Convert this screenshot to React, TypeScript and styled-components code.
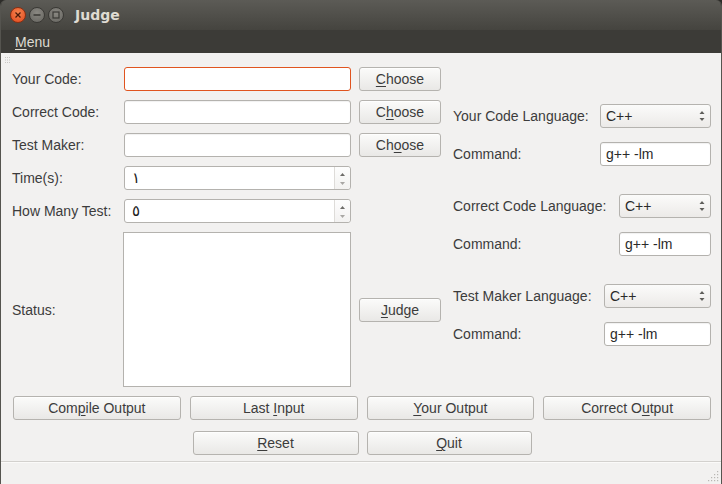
import React from "react";
import styled, { createGlobalStyle } from "styled-components";

const GlobalStyle = createGlobalStyle`
  html, body { margin: 0; padding: 0; background: #2d2c29; }
  body { font-family: "Liberation Sans", "DejaVu Sans", sans-serif; font-size: 14px; }
  * { box-sizing: border-box; }
`;

const Window = styled.div`
  width: 722px;
  height: 484px;
  display: flex;
  flex-direction: column;
  overflow: hidden;
  border-radius: 6px 6px 0 0;
  border-left: 1px solid #55544f;
  border-right: 1px solid #55544f;
`;

const TitleBar = styled.div`
  height: 30px;
  flex: none;
  display: flex;
  align-items: center;
  padding-left: 9px;
  background: linear-gradient(#5c5b56, #45443f);
`;

const WinButtons = styled.div`
  display: flex;
  gap: 3px;
  margin-right: 11px;
`;

const WinButton = styled.div<{ $close?: boolean }>`
  width: 16px;
  height: 16px;
  border-radius: 50%;
  border: 1px solid ${(p) => (p.$close ? "#8a2f12" : "#3a3935")};
  background: ${(p) =>
    p.$close
      ? "radial-gradient(circle at 50% 35%, #f6844f, #e1471c)"
      : "radial-gradient(circle at 50% 35%, #8a8882, #65645f)"};
  display: flex;
  align-items: center;
  justify-content: center;
`;

const Title = styled.div`
  color: #dfdbd2;
  font-family: "DejaVu Sans", sans-serif;
  font-weight: bold;
  font-size: 14px;
`;

const MenuBar = styled.div`
  height: 23px;
  flex: none;
  background: #3c3b37;
  display: flex;
  align-items: center;
  padding-left: 14px;
  color: #dfdbd2;
  font-size: 14px;
`;

const Body = styled.div`
  position: relative;
  flex: 1;
  background: #f2f1f0;
  display: flex;
  flex-direction: column;
`;

const Grip = styled.svg`
  position: absolute;
  left: 4px;
  top: 3px;
`;

const Main = styled.div`
  display: flex;
  padding: 14px 0 0 11px;
  gap: 12px;
`;

const LeftGrid = styled.div`
  display: grid;
  grid-template-columns: 104px 227px 82px;
  grid-template-rows: repeat(5, 24px) 155px;
  column-gap: 8px;
  row-gap: 9px;
`;

const Label = styled.div`
  color: #3c3c3c;
  font-size: 14px;
  align-self: center;
  white-space: nowrap;
`;

const TextField = styled.div<{ $focus?: boolean }>`
  height: 24px;
  background: #fff;
  border: 1px solid ${(p) => (p.$focus ? "#e0541f" : "#b4b2ae")};
  border-radius: 3px;
  display: flex;
  align-items: center;
  padding-left: 5px;
  color: #2a2a2a;
  font-size: 14px;
  box-shadow: ${(p) => (p.$focus ? "none" : "inset 0 1px 1px rgba(0,0,0,0.06)")};
`;

const SpinBox = styled.div`
  height: 24px;
  background: #fff;
  border: 1px solid #b4b2ae;
  border-radius: 3px;
  display: flex;
  align-items: stretch;
  color: #1a1a1a;
`;

const SpinValue = styled.div`
  flex: 1;
  display: flex;
  align-items: center;
  padding-left: 7px;
  font-family: "DejaVu Sans", sans-serif;
  font-size: 15px;
`;

const SpinArrows = styled.div`
  width: 16px;
  border-left: 1px solid #dedcd9;
  background: linear-gradient(#fdfdfd, #f3f2f1);
  border-radius: 0 3px 3px 0;
  display: flex;
  flex-direction: column;
  align-items: center;
  justify-content: space-between;
  padding: 6px 0 4px;
`;

const StatusArea = styled.div`
  background: #fff;
  border: 1px solid #b4b2ae;
  margin-left: -1px;
`;

const Button = styled.div<{ $w?: number }>`
  height: 24px;
  ${(p) => (p.$w ? `width: ${p.$w}px;` : "flex: 1;")}
  border: 1px solid #b5b3af;
  border-radius: 3px;
  background: linear-gradient(#fbfbfa, #e9e8e6);
  box-shadow: 0 1px 0 rgba(255,255,255,0.7) inset;
  display: flex;
  align-items: center;
  justify-content: center;
  color: #3c3c3c;
  font-size: 14px;
  white-space: pre;
  align-self: center;
`;

const Caption = styled.span`
  white-space: pre;
`;

const U = styled.span`
  text-decoration: underline;
  text-underline-offset: 2px;
`;

const RightCol = styled.div`
  width: 258px;
  padding-top: 37px;
  display: flex;
  flex-direction: column;
  gap: 28px;
`;

const LangGroup = styled.div<{ $label: number }>`
  display: grid;
  grid-template-columns: ${(p) => p.$label}px 1fr;
  grid-template-rows: 24px 24px;
  row-gap: 14px;
`;

const Combo = styled.div`
  height: 24px;
  border: 1px solid #b5b3af;
  border-radius: 3px;
  background: linear-gradient(#fbfbfa, #eceae8);
  display: flex;
  align-items: center;
  padding-left: 5px;
  padding-right: 5px;
  color: #2a2a2a;
  font-size: 14px;
`;

const ComboText = styled.span`
  flex: 1;
`;

const ButtonRow = styled.div`
  display: flex;
  gap: 9px;
  padding: 0 10px 0 12px;
  margin-top: 9px;
`;

const CenterRow = styled.div`
  display: flex;
  justify-content: center;
  gap: 8px;
  margin-top: 11px;
  padding-left: 2px;
`;

const StatusBar = styled.div`
  margin-top: auto;
  height: 23px;
  border-top: 1px solid #d3d1ce;
  box-shadow: inset 0 1px 0 #fbfaf9;
  position: relative;
`;

const SizeGrip = styled.svg`
  position: absolute;
  right: 2px;
  bottom: 2px;
`;

const Tri = ({ up }: { up?: boolean }) => (
  <svg width="5" height="3" viewBox="0 0 5 3">
    <path d={up ? "M0 3 L2.5 0 L5 3 Z" : "M0 0 L2.5 3 L5 0 Z"} fill={up ? "#6d6c69" : "#a9a7a4"} />
  </svg>
);

const ComboArrows = () => (
  <svg width="6" height="12" viewBox="0 0 6 12">
    <path d="M0.5 4 L3 1 L5.5 4 Z" fill="#5e5d5a" />
    <path d="M0.5 8 L3 11 L5.5 8 Z" fill="#5e5d5a" />
  </svg>
);

const Spin = ({ value }: { value: string }) => (
  <SpinBox>
    <SpinValue>{value}</SpinValue>
    <SpinArrows>
      <Tri up />
      <Tri />
    </SpinArrows>
  </SpinBox>
);

const Lang = ({ label, width }: { label: string; width: number }) => (
  <LangGroup $label={width}>
    <Label>{label}</Label>
    <Combo>
      <ComboText>C++</ComboText>
      <ComboArrows />
    </Combo>
    <Label>Command:</Label>
    <TextField>g++ -lm</TextField>
  </LangGroup>
);

const Btn = ({
  pre,
  u,
  post,
  w,
}: {
  pre?: string;
  u: string;
  post?: string;
  w?: number;
}) => (
  <Button $w={w}>
    <Caption>
      {pre}
      <U>{u}</U>
      {post}
    </Caption>
  </Button>
);

export default function App() {
  return (
    <>
      <GlobalStyle />
      <Window>
        <TitleBar>
          <WinButtons>
            <WinButton $close>
              <svg width="8" height="8" viewBox="0 0 8 8">
                <path d="M1.5 1.5 L6.5 6.5 M6.5 1.5 L1.5 6.5" stroke="#4a1a0a" strokeWidth="1.3" />
              </svg>
            </WinButton>
            <WinButton>
              <svg width="8" height="8" viewBox="0 0 8 8">
                <path d="M0.5 4 L7.5 4" stroke="#3a3935" strokeWidth="1.3" />
              </svg>
            </WinButton>
            <WinButton>
              <svg width="8" height="8" viewBox="0 0 8 8">
                <rect x="1" y="1" width="6" height="6" fill="none" stroke="#3a3935" strokeWidth="1.2" />
              </svg>
            </WinButton>
          </WinButtons>
          <Title>Judge</Title>
        </TitleBar>
        <MenuBar>
          <Caption>
            <U>M</U>enu
          </Caption>
        </MenuBar>
        <Body>
          <Grip width="6" height="8" viewBox="0 0 6 8">
            <path d="M0 1.5 H6 M0 4 H6 M0 6.5 H6" stroke="#c9c7c4" strokeWidth="1" strokeDasharray="1 1" />
          </Grip>
          <Main>
            <LeftGrid>
              <Label>Your Code:</Label>
              <TextField $focus />
              <Btn u="C" post="hoose" />
              <Label>Correct Code:</Label>
              <TextField />
              <Btn pre="C" u="h" post="oose" />
              <Label>Test Maker:</Label>
              <TextField />
              <Btn pre="Ch" u="o" post="ose" />
              <Label>Time(s):</Label>
              <Spin value="١" />
              <div />
              <Label>How Many Test:</Label>
              <Spin value="٥" />
              <div />
              <Label>Status:</Label>
              <StatusArea />
              <Btn u="J" post="udge" />
            </LeftGrid>
            <RightCol>
              <Lang label="Your Code Language:" width={147} />
              <Lang label="Correct Code Language:" width={166} />
              <Lang label="Test Maker Language:" width={151} />
            </RightCol>
          </Main>
          <ButtonRow>
            <Btn pre="Com" u="p" post="ile Output" />
            <Btn pre="Last " u="I" post="nput" />
            <Btn u="Y" post="our Output" />
            <Btn pre="Correct O" u="u" post="tput" />
          </ButtonRow>
          <CenterRow>
            <Btn u="R" post="eset" w={166} />
            <Btn u="Q" post="uit" w={165} />
          </CenterRow>
          <StatusBar>
            <SizeGrip width="12" height="12" viewBox="0 0 12 12">
              {[
                [10, 2],
                [10, 5],
                [7, 5],
                [10, 8],
                [7, 8],
                [4, 8],
                [10, 11],
                [7, 11],
                [4, 11],
                [1, 11],
              ].map(([x, y], i) => (
                <rect key={i} x={x} y={y - 1} width="1.2" height="1.2" fill="#b9b7b3" />
              ))}
            </SizeGrip>
          </StatusBar>
        </Body>
      </Window>
    </>
  );
}
